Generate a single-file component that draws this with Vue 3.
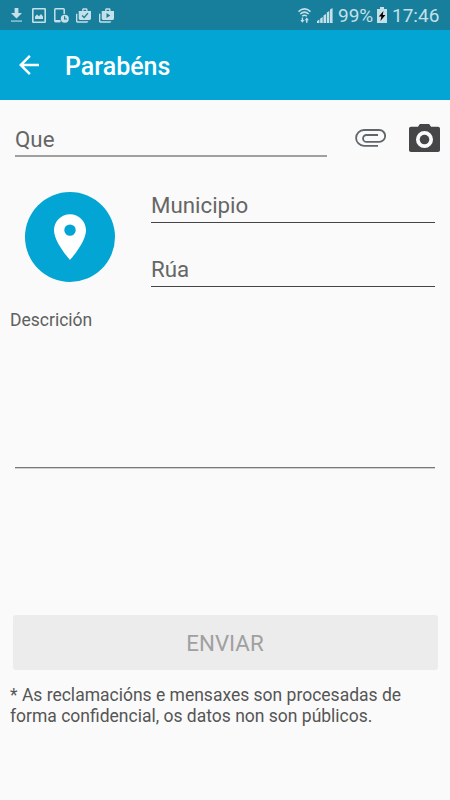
<script setup>
import { ref } from 'vue'

const title = ref('Parabéns')
const battery = ref('99%')
const time = ref('17:46')
</script>

<template>
  <div class="screen">
    <header class="status-bar">
      <div class="notifications">
        <svg class="download" width="11" height="14" viewBox="0 0 11 14">
          <path d="M3.600 0h3.800v5H11L5.500 10.600 0 5h3.600z" />
          <path d="M0 12.200h11V14H0z" opacity="0.6" />
        </svg>
        <svg class="picture" width="14" height="15" viewBox="0 0 14 15">
          <path fill-rule="evenodd" d="M1.200 0h11.600Q14 0 14 1.200v12.600q0 1.200-1.200 1.200H1.200Q0 15 0 13.800V1.200Q0 0 1.200 0zM1.600 1.600v11.800h10.800V1.600zM3 11V8.500l2-2 2 1.700 2-2.200 2 2.500V11z" />
        </svg>
        <svg class="device" width="15" height="15" viewBox="0 0 15 15">
          <path d="M10.200 6V1.600Q10.200.8 9.400.8H1.600Q.8.800.8 1.600v11.200q0 .8.8.8h4.600" fill="none" stroke="currentColor" stroke-width="1.500" />
          <path d="M1 12h5.500v2.200H1z" />
          <circle cx="10.800" cy="10.800" r="4" />
          <path d="M10.600 8.300V11h2.300" fill="none" stroke="#177f9b" stroke-width="1.200" />
        </svg>
        <svg class="bag" width="15" height="15" viewBox="1 1 22 21">
          <path d="M3 9H1v11c0 1.110.89 2 2 2h14c1.110 0 2-.89 2-2H3V9zm15-4V3c0-1.110-.89-2-2-2h-4c-1.110 0-2 .89-2 2v2H5v11c0 1.110.89 2 2 2h14c1.110 0 2-.89 2-2V5h-5zm-6-2h4v2h-4V3z" />
          <path d="M10 11.500l3 3 5.500-6.500" fill="none" stroke="#177f9b" stroke-width="2" />
        </svg>
        <svg class="bag" width="15" height="15" viewBox="1 1 22 21">
          <path d="M3 9H1v11c0 1.110.89 2 2 2h14c1.110 0 2-.89 2-2H3V9zm15-4V3c0-1.110-.89-2-2-2h-4c-1.110 0-2 .89-2 2v2H5v11c0 1.110.89 2 2 2h14c1.110 0 2-.89 2-2V5h-5zm-6-2h4v2h-4V3zm0 12V8l5.500 3.500-5.500 3.500z" />
        </svg>
      </div>
      <div class="system">
        <svg class="wifi" width="13" height="15" viewBox="0 0 13 15">
          <g fill="none" stroke="currentColor" stroke-width="1.500">
            <path d="M.5 3.600Q6.500-1.800 12.500 3.600" />
            <path d="M2.300 6Q6.500 2.200 10.700 6" />
            <path d="M4.200 8.300Q6.500 6.200 8.800 8.300" />
          </g>
          <path d="M3.700 9.500h1.400V12h1.400l-2.100 2.800L2.300 12h1.400zM8 14.800V12.300H6.700L8.800 9.500l2.100 2.800H9.500v2.500z" />
        </svg>
        <svg class="signal" width="16" height="15" viewBox="0 0 16 15">
          <path d="M0 13l2.400-1.500V15H0zM3.200 10.500l2.500-1.500V15H3.200zM6.500 7.500L9 6v9H6.500zM9.800 4.500L12.300 3v12H9.800zM13 1.500L15.600 0v15H13z" />
        </svg>
        <span class="percent">{{ battery }}</span>
        <svg class="battery" width="10" height="16" viewBox="0 0 10 16">
          <path d="M3 0h4v2h3v14H0V2h3z" />
          <path d="M6.500 4L1.800 9.500h2.600L3.400 14l5-6H5.700z" fill="#000" />
        </svg>
        <span class="time">{{ time }}</span>
      </div>
    </header>

    <nav class="toolbar">
      <svg width="30" height="30" viewBox="0 0 24 24">
        <path d="M20 11H7.830l5.590-5.590L12 4l-8 8 8 8 1.410-1.410L7.830 13H20v-2z" />
      </svg>
      <h1>{{ title }}</h1>
    </nav>

    <main class="form">
      <div class="subject-row">
        <div class="field subject">Que</div>
        <svg class="clip" width="31" height="18" viewBox="0 0 31 18">
          <path d="M23 16.800H9A7.900 7.900 0 0 1 9 1h15.200a5.900 5.900 0 0 1 0 11.900H11.500a3.450 3.450 0 0 1 0-6.900H23" />
        </svg>
        <svg class="camera" width="31" height="28" viewBox="2 2 20 18">
          <path fill-rule="evenodd" d="M9 2L7.800 3.700H3.300C2.500 3.700 2 4.200 2 5v13.700c0 .8.500 1.300 1.300 1.300h17.400c.8 0 1.300-.5 1.300-1.300V5c0-.8-.5-1.300-1.300-1.300h-4.500L15 2H9zm3 15.500a5.500 5.500 0 1 1 0-11 5.500 5.500 0 0 1 0 11z" />
          <circle cx="12" cy="12" r="3.100" />
        </svg>
      </div>

      <div class="place-row">
        <div class="pin">
          <svg width="32" height="46" viewBox="5 2 14 20">
            <path d="M12 2C8.130 2 5 5.130 5 9c0 5.250 7 13 7 13s7-7.750 7-13c0-3.870-3.130-7-7-7zm0 9.500a2.500 2.500 0 0 1 0-5 2.500 2.500 0 0 1 0 5z" />
          </svg>
        </div>
        <div class="place-fields">
          <div class="field">Municipio</div>
          <div class="field">Rúa</div>
        </div>
      </div>

      <div class="description-label">Descrición</div>
      <div class="description"></div>

      <button class="send" disabled>ENVIAR</button>
      <p class="note">* As reclamacións e mensaxes son procesadas de<br>forma confidencial, os datos non son públicos.</p>
    </main>
  </div>
</template>

<style>
body {
  margin: 0;
  background: #fafafa;
}
</style>

<style scoped>
.screen {
  width: 450px;
  height: 800px;
  overflow: hidden;
  background: #fafafa;
  font-family: Roboto, sans-serif;
  color: #666;
}

svg {
  display: block;
  flex: none;
  fill: currentColor;
}

.status-bar {
  display: flex;
  justify-content: space-between;
  height: 30px;
  box-sizing: border-box;
  padding: 0 11px;
  background: #177f9b;
  color: #c5e0e8;
}

.notifications,
.system {
  display: flex;
  align-items: center;
}

.picture {
  margin-left: 10px;
}

.device {
  margin-left: 8px;
}

.bag {
  margin-left: 7px;
}

.bag + .bag {
  margin-left: 8px;
}

.signal {
  margin-left: 6px;
}

.percent,
.time {
  font-size: 19px;
  line-height: 30px;
}

.percent {
  width: 34px;
  margin: 2px 0 0 5px;
}

.battery {
  margin-left: 5px;
}

.time {
  width: 47px;
  margin: 2px 0 0 5px;
}

.toolbar {
  display: flex;
  align-items: center;
  height: 70px;
  box-sizing: border-box;
  padding-left: 14px;
  background: #02a5d4;
  color: #fff;
}

h1 {
  margin: 4px 0 0 21px;
  font-size: 25px;
  font-weight: 500;
  line-height: 30px;
}

.field {
  box-sizing: border-box;
  height: 38px;
  border-bottom: 1px solid #444;
  font-size: 22.3px;
  line-height: 40px;
}

.subject-row {
  display: flex;
  align-items: flex-start;
  padding: 19px 10px 0 15px;
}

.subject {
  width: 312px;
  border-bottom: 2px solid #a0a0a0;
}

.clip {
  margin: 10px 0 0 28px;
  fill: none;
  stroke: #5f676a;
  stroke-width: 1.8;
}

.camera {
  margin: 5px 0 0 23px;
  color: #464649;
}

.place-row {
  display: flex;
  padding: 28px 15px 0 25px;
}

.pin {
  display: flex;
  align-items: center;
  justify-content: center;
  width: 90px;
  height: 90px;
  margin-top: 7px;
  border-radius: 50%;
  background: #02a5d4;
  color: #fff;
}

.place-fields {
  flex: 1;
  display: flex;
  flex-direction: column;
  gap: 26px;
  margin-left: 36px;
}

.description-label {
  margin: 22px 0 0 10px;
  font-size: 17.5px;
  line-height: 22px;
  color: #606060;
}

.description {
  height: 136px;
  margin: 0 15px;
  border-bottom: 1px solid #777;
  box-shadow: 0 1px #d0d0d0;
}

.send {
  display: block;
  width: 425px;
  height: 55px;
  margin: 147px 0 0 12.5px;
  padding: 0;
  border: 0;
  border-radius: 3px;
  background: #ececec;
  color: #a0a0a0;
  font-family: inherit;
  font-size: 22.3px;
}

.note {
  margin: 15px 0 0 10px;
  font-size: 17.5px;
  line-height: 20.5px;
  color: #555;
  white-space: nowrap;
}
</style>
